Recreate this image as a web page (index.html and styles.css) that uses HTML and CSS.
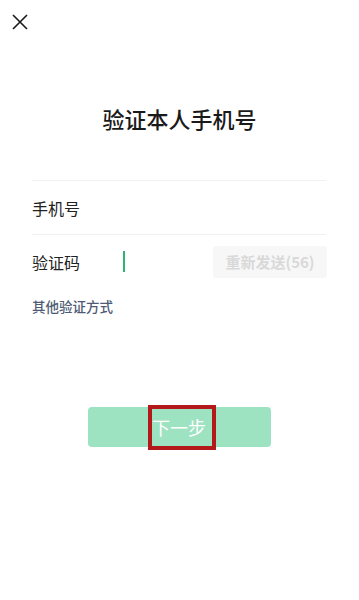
FILE: index.html
```html
<!DOCTYPE html>
<html lang="zh-CN">
  <head>
    <meta charset="UTF-8" />
    <meta name="viewport" content="width=device-width, initial-scale=1.0" />
    <title>验证本人手机号</title>
    <link rel="stylesheet" href="styles.css">
  </head>
  <body>
    <div class="page">
      <div class="top-bar">
        <button class="close-btn" type="button" aria-label="关闭">
          <svg width="16" height="16" viewBox="0 0 16 16">
            <path d="M1 1 L15 15 M15 1 L1 15" stroke="#1a1a1a" stroke-width="1.6" fill="none" />
          </svg>
        </button>
      </div>

      <h1 class="title">验证本人手机号</h1>

      <form class="verify-form">
        <div class="field">
          <label class="field-label">手机号</label>
        </div>
        <div class="field">
          <label class="field-label">验证码</label>
          <span class="cursor"></span>
          <button type="button" class="resend" disabled>重新发送(56)</button>
        </div>
        <a class="other-way" href="#">其他验证方式</a>

        <div class="actions">
          <button type="submit" class="btn-next">
            下一步
            <span class="highlight"></span>
          </button>
        </div>
      </form>
    </div>
  </body>
</html>
```

FILE: styles.css
```css
* {
  margin: 0;
  padding: 0;
  box-sizing: border-box;
}

body {
  font-family: "Noto Sans CJK SC", "Noto Sans", sans-serif;
  background: #fff;
  color: #1a1a1a;
}

.page {
  width: 359px;
  min-height: 600px;
}

.top-bar {
  height: 44px;
  display: flex;
  align-items: flex-start;
  padding: 14px 0 0 12px;
}

.close-btn {
  background: none;
  border: none;
  width: 16px;
  height: 16px;
  display: flex;
}

.title {
  margin-top: 59px;
  font-size: 22px;
  font-weight: 500;
  line-height: 30px;
  text-align: center;
  color: #1a1a1a;
}

.verify-form {
  margin-top: 47px;
  padding: 0 33px 0 32px;
}

.field {
  display: flex;
  align-items: center;
  height: 54px;
  border-top: 1px solid #f1f1f1;
}

.field:last-of-type {
  height: 55px;
  border-bottom: 1px solid #f1f1f1;
}

.field-label {
  width: 91px;
  font-size: 16px;
  color: #222;
}

.cursor {
  width: 2px;
  height: 21px;
  background: #2bb472;
}

.resend {
  margin-left: auto;
  margin-right: -1px;
  width: 114px;
  height: 32px;
  border: none;
  border-radius: 3px;
  background: #f7f7f7;
  color: #d9d9d9;
  font-family: inherit;
  font-size: 15px;
  font-weight: 700;
}

.other-way {
  display: block;
  margin-top: 8px;
  font-size: 13.5px;
  font-weight: 500;
  line-height: 20px;
  color: #4f5b74;
  text-decoration: none;
}

.actions {
  margin-top: 91px;
  display: flex;
  justify-content: center;
}

.btn-next {
  position: relative;
  width: 183px;
  height: 40px;
  border: none;
  border-radius: 4px;
  background: #9de3c1;
  color: #fff;
  font-family: inherit;
  font-size: 18px;
}

.highlight {
  position: absolute;
  left: 60px;
  top: -2px;
  width: 68px;
  height: 45px;
  border: 4px solid #b3181b;
}
```
